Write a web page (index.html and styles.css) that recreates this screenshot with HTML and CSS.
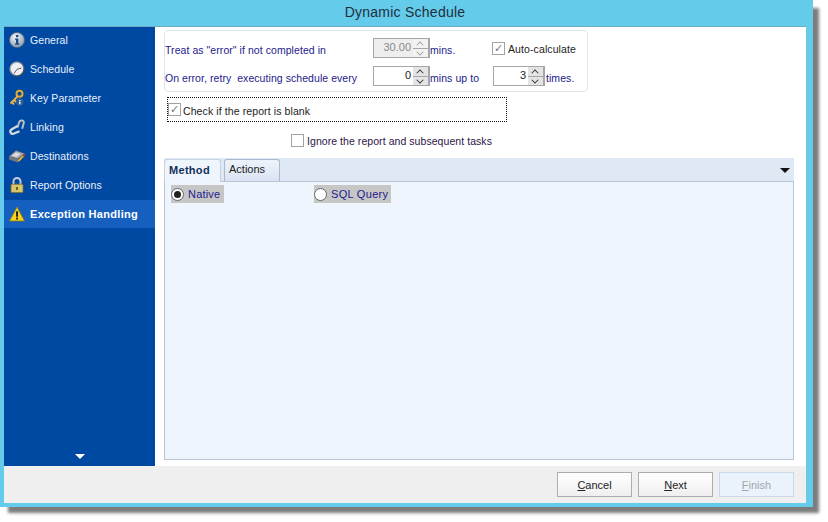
FILE: index.html
```html
<!DOCTYPE html>
<html lang="en">
<head>
<meta charset="utf-8">
<title>Dynamic Schedule</title>
<link rel="stylesheet" href="styles.css">
</head>
<body>
<div class="window">
  <div class="titlebar">Dynamic Schedule</div>
  <div class="client">
    <div class="upper">
      <nav class="sidebar">
        <ul class="navlist">
          <li class="navitem">
            <svg class="navicon" viewBox="0 0 16 16"><defs><radialGradient id="g1" cx=".4" cy=".3" r=".8"><stop offset="0" stop-color="#f2f5f8"/><stop offset="1" stop-color="#7f93a8"/></radialGradient></defs><circle cx="8" cy="8" r="7.5" fill="url(#g1)" stroke="#56677a" stroke-width=".8"/><rect x="6.9" y="3" width="2.4" height="2.2" fill="#1c4a86"/><path d="M6 6.5h3.3v5h1v1.2H6v-1.2h1v-3.8H6z" fill="#1c4a86"/></svg>
            <span>General</span>
          </li>
          <li class="navitem">
            <svg class="navicon" viewBox="0 0 16 16"><defs><linearGradient id="g2" x1="0" y1="0" x2="1" y2="1"><stop offset="0" stop-color="#c8ccd2"/><stop offset="1" stop-color="#2e3238"/></linearGradient></defs><circle cx="8" cy="8" r="7.6" fill="url(#g2)"/><circle cx="8" cy="8" r="6.2" fill="#eef0f3"/><path d="M8 8.3 12.5 7M8 8.3 5 12.5" stroke="#4a4f56" stroke-width=".9" fill="none"/></svg>
            <span>Schedule</span>
          </li>
          <li class="navitem">
            <svg class="navicon" viewBox="0 0 16 16"><circle cx="10.5" cy="3.8" r="3" fill="none" stroke="#e3a92f" stroke-width="2"/><path d="M8.5 6.3 1.5 13.5M3 12 5 14.5M5 10 7 12" stroke="#eab545" stroke-width="1.9" fill="none"/><circle cx="10.8" cy="12" r="3.8" fill="#2a5f96"/><rect x="10.2" y="10" width="1.3" height="1.1" fill="#fff"/><rect x="10.2" y="11.6" width="1.3" height="2.7" fill="#fff"/></svg>
            <span>Key Parameter</span>
          </li>
          <li class="navitem">
            <svg class="navicon" viewBox="0 0 16 16"><path d="M8.5 8.5 10.2 3C11 .6 15.3.9 14.8 3.8L13.2 9.8" fill="none" stroke="#b9bec5" stroke-width="2"/><path d="M8.5 7 2.8 10.3C.1 12 1.3 15.6 4.5 14.8L10.5 12.2" fill="none" stroke="#d6d9dd" stroke-width="2.2"/></svg>
            <span>Linking</span>
          </li>
          <li class="navitem">
            <svg class="navicon" viewBox="0 0 16 16"><path d="M0 8.5 7 2.5 15.5 5.5 9 11Z" fill="#a9adb3" stroke="#4f545b" stroke-width=".6"/><path d="M0 8.5 9 11v3.5L0 11.5Z" fill="#74787e"/><path d="M9 11 15.5 5.5v3.5L9 14.5Z" fill="#565a60"/><path d="M3 7.5 7 4.4l4.5 1.6L7.3 9Z" fill="#dcdee2"/><path d="M9.5 13 14 8" stroke="#e6b93c" stroke-width="1.8"/><path d="M14 8 15.5 6.4" stroke="#c93b32" stroke-width="1.8"/></svg>
            <span>Destinations</span>
          </li>
          <li class="navitem">
            <svg class="navicon" viewBox="0 0 16 16"><path d="M4.5 8V4.5a3.5 3.5 0 0 1 7 0V8" fill="none" stroke="#c9ced6" stroke-width="1.9"/><rect x="2" y="7.2" width="12" height="8.4" rx="1.2" fill="#d9c56a" stroke="#7d6f2c" stroke-width=".8"/><rect x="7" y="10" width="2" height="3" fill="#6d6128"/></svg>
            <span>Report Options</span>
          </li>
          <li class="navitem navitem-active">
            <svg class="navicon" viewBox="0 0 16 16"><path d="M8 1 15.5 15H.5Z" fill="#f6d21f" stroke="#8f7a10" stroke-width=".8" stroke-linejoin="round"/><rect x="7.1" y="5.3" width="1.9" height="5.4" fill="#1a1a1a"/><rect x="7.1" y="11.6" width="1.9" height="1.9" fill="#1a1a1a"/></svg>
            <span>Exception Handling</span>
          </li>
        </ul>
        <div class="nav-more"></div>
      </nav>
      <main class="content">
        <section class="optionsbox">
          <span class="lbl">Treat as "error" if not completed in</span>
          <span class="spin spin-disabled"><span class="spin-val">30.00</span><span class="spin-btns"><i class="up"></i><i class="dn"></i></span></span>
          <span class="lbl">mins.</span>
          <label class="check autocalc"><span class="box checked">✓</span><span class="check-text">Auto-calculate</span></label>
          <span class="lbl">On error, retry &nbsp;executing schedule every</span>
          <span class="spin"><span class="spin-val">0</span><span class="spin-btns"><i class="up"></i><i class="dn"></i></span></span>
          <span class="lbl">mins up to</span>
          <span class="spin spin-small"><span class="spin-val">3</span><span class="spin-btns"><i class="up"></i><i class="dn"></i></span></span>
          <span class="lbl lbl-times">times.</span>
        </section>
        <label class="blankrow"><span class="box checked">✓</span><span class="check-text">Check if the report is blank</span></label>
        <label class="ignorerow"><span class="box"></span><span class="ignore-text">Ignore the report and subsequent tasks</span></label>
        <section class="tabs">
          <div class="tabstrip">
            <span class="tab tab-active">Method</span>
            <span class="tab">Actions</span>
            <span class="tabmenu"></span>
          </div>
          <div class="tabpanel">
            <label class="radio radio-native"><span class="dot dot-on"></span>Native</label>
            <label class="radio radio-sql"><span class="dot"></span>SQL Query</label>
          </div>
        </section>
      </main>
    </div>
    <footer class="footer">
      <button class="btn" type="button"><u>C</u>ancel</button>
      <button class="btn" type="button"><u>N</u>ext</button>
      <button class="btn btn-disabled" type="button"><u>F</u>inish</button>
    </footer>
  </div>
</div>
</body>
</html>
```
FILE: styles.css
```css
* { box-sizing: border-box; }
html, body { margin: 0; padding: 0; background: #fff; }
body { width: 828px; height: 522px; overflow: hidden; font-family: "Liberation Sans", Arial, sans-serif; font-size: 11px; }

.window {
  width: 813px; height: 507px;
  background: #65cbea;
  padding: 0 7px 4px 4px;
  display: flex; flex-direction: column;
  box-shadow: 7px 7px 3px -1px #7c7c7c;
}
.titlebar {
  height: 26px; flex: none;
  display: flex; align-items: center; justify-content: center;
  font-size: 14px; letter-spacing: .25px; color: #1f2f3c;
  padding-bottom: 2px;
}
.client { flex: 1; display: flex; flex-direction: column; background: #fff; border-top: 1px solid #6fa9c4; min-height: 0; }
.upper { flex: 1; display: flex; min-height: 0; }

.sidebar { width: 151px; flex: none; background: #0049a3; display: flex; flex-direction: column; }
.navlist { list-style: none; margin: 0; padding: 0; flex: 1; }
.navitem {
  height: 29px; display: flex; align-items: center; gap: 5px;
  padding: 0 0 3px 5px; color: #e8f0fa; font-size: 10.5px; letter-spacing: .08px;
}
.navitem-active { background: #1560bf; height: 28px; padding-bottom: 0; color: #fff; font-weight: bold; font-size: 11px; letter-spacing: .3px; margin-top: -1px; }
.navicon { width: 16px; height: 16px; flex: none; overflow: visible; }
.nav-more { width: 0; height: 0; margin: 0 0 7px 71px; border-left: 5px solid transparent; border-right: 5px solid transparent; border-top: 5px solid #fff; }

.content { flex: 1; padding: 3px 12px 6px 9px; display: flex; flex-direction: column; min-width: 0; }

.lbl { color: #1d1a8c; white-space: nowrap; font-size: 10.5px; letter-spacing: .06px; padding-top: 3px; }
.lbl-times { padding-left: 1px; }
.optionsbox {
  width: 424px; height: 62px; flex: none;
  border: 1px solid #dde3ea; border-radius: 4px;
  display: grid;
  grid-template-columns: 208px 57px 63px 52px 1fr;
  grid-template-rows: 28px 28px;
  align-content: start; align-items: center;
  padding-top: 3px;
}
.autocalc { grid-column: 4 / 6; margin-left: -1px; }
.autocalc .check-text { padding-top: 2px; }
.spin {
  display: flex; width: 57px; height: 20px; background: #fff;
  border: 1px solid #a6a6a6; border-right-width: 2px;
  font-size: 11px; color: #222;
}
.spin-small { width: 52px; }
.spin-val { flex: 1; text-align: right; padding: 1px 2px 0 0; line-height: 15px; }
.spin-btns { width: 15px; display: flex; flex-direction: column; background: #a6a6a6; gap: 1px; }
.spin-btns i { flex: 1; background: #e4e4e4; position: relative; display: block; }
.spin-btns i::after {
  content: ""; position: absolute; left: 4px; width: 5px; height: 5px;
  border-left: 1px solid #222; border-top: 1px solid #222;
  transform: rotate(45deg) scale(.85);
}
.spin-btns .up::after { top: 3px; }
.spin-btns .dn::after { top: 0; transform: rotate(225deg) scale(.85); }
.spin-disabled { background: #eeeeee; color: #8a8a8a; }
.spin-disabled .spin-btns i { background: #f2f2f2; }
.spin-disabled .spin-btns i::after { border-color: #9a9a9a; }

.check { display: inline-flex; align-items: center; gap: 3px; }
.box {
  width: 13px; height: 13px; flex: none; border: 1px solid #a3a3a3; background: #fff;
  display: inline-flex; align-items: center; justify-content: center;
  font: bold 11px "DejaVu Sans", sans-serif; color: #777; line-height: 1;
}
.check-text { color: #222; font-size: 10.5px; letter-spacing: .1px; white-space: nowrap; }
.blankrow {
  width: 340px; height: 25px; flex: none; margin: 5px 0 0 3px; padding: 0 0 1px 0;
  border: 1px dotted #111;
  display: flex; align-items: center; gap: 2px;
}
.blankrow .check-text { padding-top: 3px; }
.ignorerow { display: flex; align-items: center; gap: 3px; margin: 12px 0 0 127px; height: 13px; flex: none; }
.ignore-text { color: #2d1446; font-size: 10.5px; letter-spacing: .06px; white-space: nowrap; }

.tabs { flex: 1; display: flex; flex-direction: column; margin-top: 11px; width: 630px; min-height: 0; }
.tabstrip { height: 23px; flex: none; background: #dfe8f5; display: flex; align-items: flex-end; position: relative; }
.tab {
  height: 22px; padding: 0 9px 3px 4px; width: 56px;
  display: flex; align-items: center;
  background: linear-gradient(#eef3fa, #d9e4f2);
  border: 1px solid #a9b9cf; border-bottom: 0; border-radius: 3px 3px 0 0;
  font-size: 11px; color: #222;
}
.tab:nth-child(2) { margin-left: 3px; }
.tab-active {
  width: 57px; height: 23px; font-weight: bold; color: #12305c; background: #eef5fd;
  padding: 0 0 3px 4px; margin-bottom: -1px; position: relative; z-index: 1; border-color: #c5d2e3; font-size: 11px; letter-spacing: .3px;
}
.tabmenu { position: absolute; right: 4px; top: 10px; width: 0; height: 0; border-left: 5px solid transparent; border-right: 5px solid transparent; border-top: 5px solid #111; }
.tabpanel {
  flex: 1; background: #eef5fd; border: 1px solid #b9c4d6;
  display: flex; align-items: flex-start; gap: 90px; padding: 3px 0 0 6px;
}
.radio { display: inline-flex; align-items: center; gap: 4px; height: 18px; background: #c6c6c6; color: #1d1a8c; font-size: 11px; letter-spacing: .2px; }
.radio-native { width: 53px; }
.radio-sql { width: 77px; letter-spacing: .3px; }
.dot { width: 13px; height: 13px; border-radius: 50%; background: #fff; border: 1px solid #666; flex: none; display: inline-flex; align-items: center; justify-content: center; }
.dot-on::after { content: ""; width: 7px; height: 7px; border-radius: 50%; background: #222; }

.footer { height: 37px; flex: none; background: #efefef; display: flex; justify-content: flex-end; gap: 6px; padding: 6px 12px 0 0; }
.btn {
  width: 75px; height: 25px; margin: 0; padding: 0;
  border: 1px solid #adadad; background: linear-gradient(#ffffff, #efefef);
  font: 11px "Liberation Sans", Arial, sans-serif; color: #222;
}
.btn-disabled { background: #eaf2fb; border-color: #c9d9ea; color: #a5a5a5; }
```
